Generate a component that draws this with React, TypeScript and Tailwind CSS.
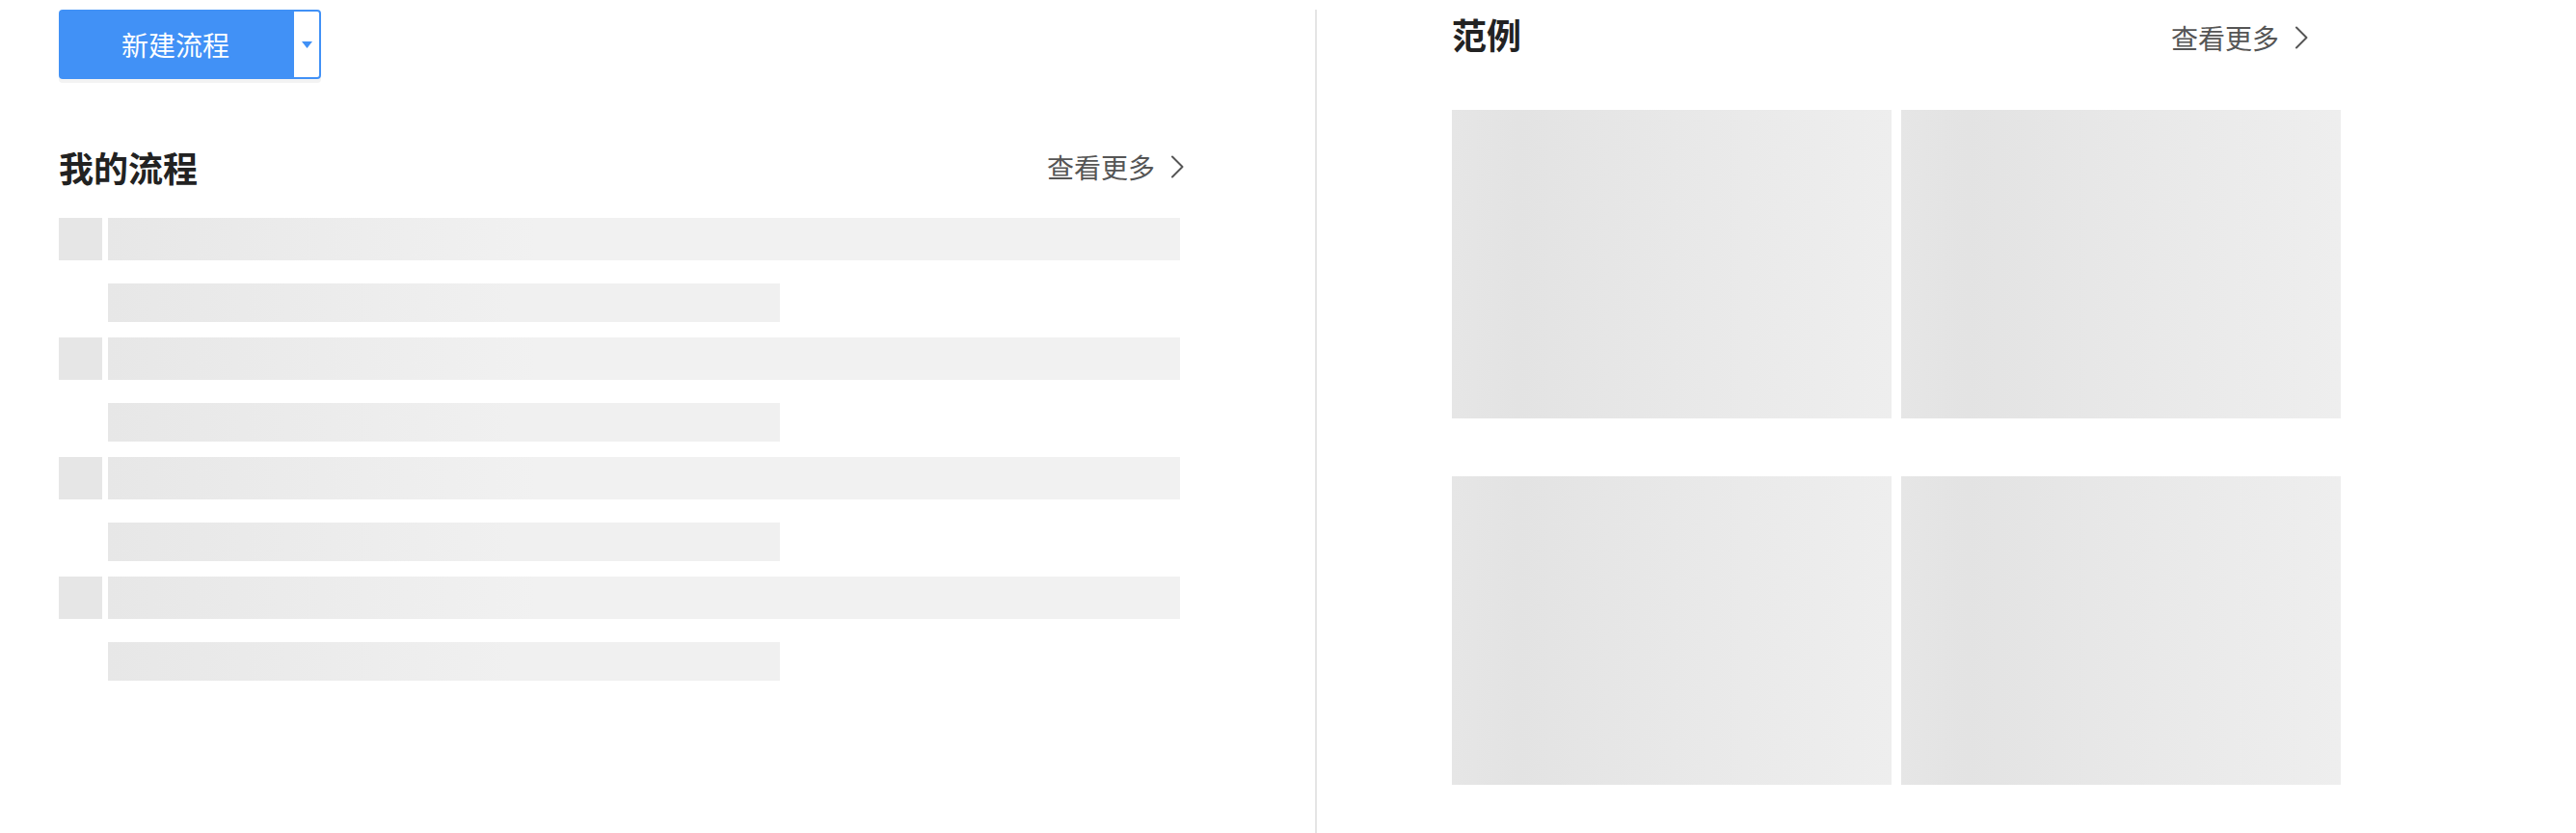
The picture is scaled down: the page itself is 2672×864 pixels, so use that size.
import React from "react";

const FONT = { fontFamily: '"Noto Sans CJK SC", "Noto Sans", sans-serif' };

function Chevron() {
  return (
    <svg width="14" height="24" viewBox="0 0 14 24" className="block">
      <path d="M2 1.5 L12.5 12 L2 22.5" fill="none" stroke="#555" strokeWidth="2" strokeLinecap="round" strokeLinejoin="round" />
    </svg>
  );
}

function MoreLink({ className = "" }: { className?: string }) {
  return (
    <div className={`flex items-center gap-[16px] text-[28px] leading-[40px] text-[#555] ${className}`}>
      <span>查看更多</span>
      <Chevron />
    </div>
  );
}

function SkeletonRow() {
  return (
    <div className="flex flex-col">
      <div className="flex gap-[6px] h-[44px]">
        <div className="w-[45px] h-[44px] bg-[#e6e6e6]" />
        <div className="flex-1 h-[44px] bg-[linear-gradient(90deg,#e7e7e7_0%,#f1f1f1_40%,#f1f1f1_100%)]" />
      </div>
      <div className="flex mt-[24px] h-[40px]">
        <div className="w-[51px]" />
        <div className="w-[697px] h-[40px] bg-[linear-gradient(90deg,#e7e7e7_0%,#f0f0f0_60%,#f0f0f0_100%)]" />
      </div>
    </div>
  );
}

function Card() {
  return <div className="w-[456px] h-[320px] bg-[linear-gradient(90deg,#e6e6e6_0%,#e3e3e3_15%,#e8e8e8_50%,#eeeeee_100%)]" />;
}

export default function App() {
  return (
    <div className="w-[2672px] h-[864px] bg-white flex pt-[10px] overflow-hidden" style={FONT}>
      {/* Left panel */}
      <div className="w-[1364px] pl-[61px] shrink-0">
        <div className="w-[1163px] flex flex-col">
          <div className="flex h-[72px] w-[272px] rounded-[4px] shadow-[0_4px_0_#f3f3f3]">
            <div className="w-[242px] h-full bg-[#4191f6] rounded-l-[4px] flex items-center justify-center text-white text-[28px] leading-none">
              新建流程
            </div>
            <div className="w-[30px] h-full bg-white border-[2px] border-[#4191f6] rounded-r-[4px] flex items-center justify-center">
              <svg width="11" height="7" viewBox="0 0 11 7">
                <path d="M0 0 L11 0 L5.5 7 Z" fill="#4191f6" />
              </svg>
            </div>
          </div>
          <div className="mt-[66px] h-[50px] flex items-center justify-between">
            <h2 className="text-[36px] font-bold leading-[50px] text-[#222]">我的流程</h2>
            <MoreLink className="mr-[-4px]" />
          </div>
          <div className="mt-[28px] flex flex-col gap-[16px]">
            <SkeletonRow />
            <SkeletonRow />
            <SkeletonRow />
            <SkeletonRow />
          </div>
        </div>
      </div>
      {/* Divider */}
      <div className="w-[2px] self-stretch bg-[#e5e5e5] shrink-0" />
      {/* Right panel */}
      <div className="pl-[140px] shrink-0">
        <div className="w-[922px] flex flex-col">
          <div className="w-[888px] h-[50px] flex items-center justify-between">
            <h2 className="text-[36px] font-bold leading-[50px] text-[#222]">范例</h2>
            <MoreLink className="mt-[8px]" />
          </div>
          <div className="mt-[54px] grid grid-cols-[456px_456px] gap-x-[10px] gap-y-[60px]">
            <Card />
            <Card />
            <Card />
            <Card />
          </div>
        </div>
      </div>
    </div>
  );
}
